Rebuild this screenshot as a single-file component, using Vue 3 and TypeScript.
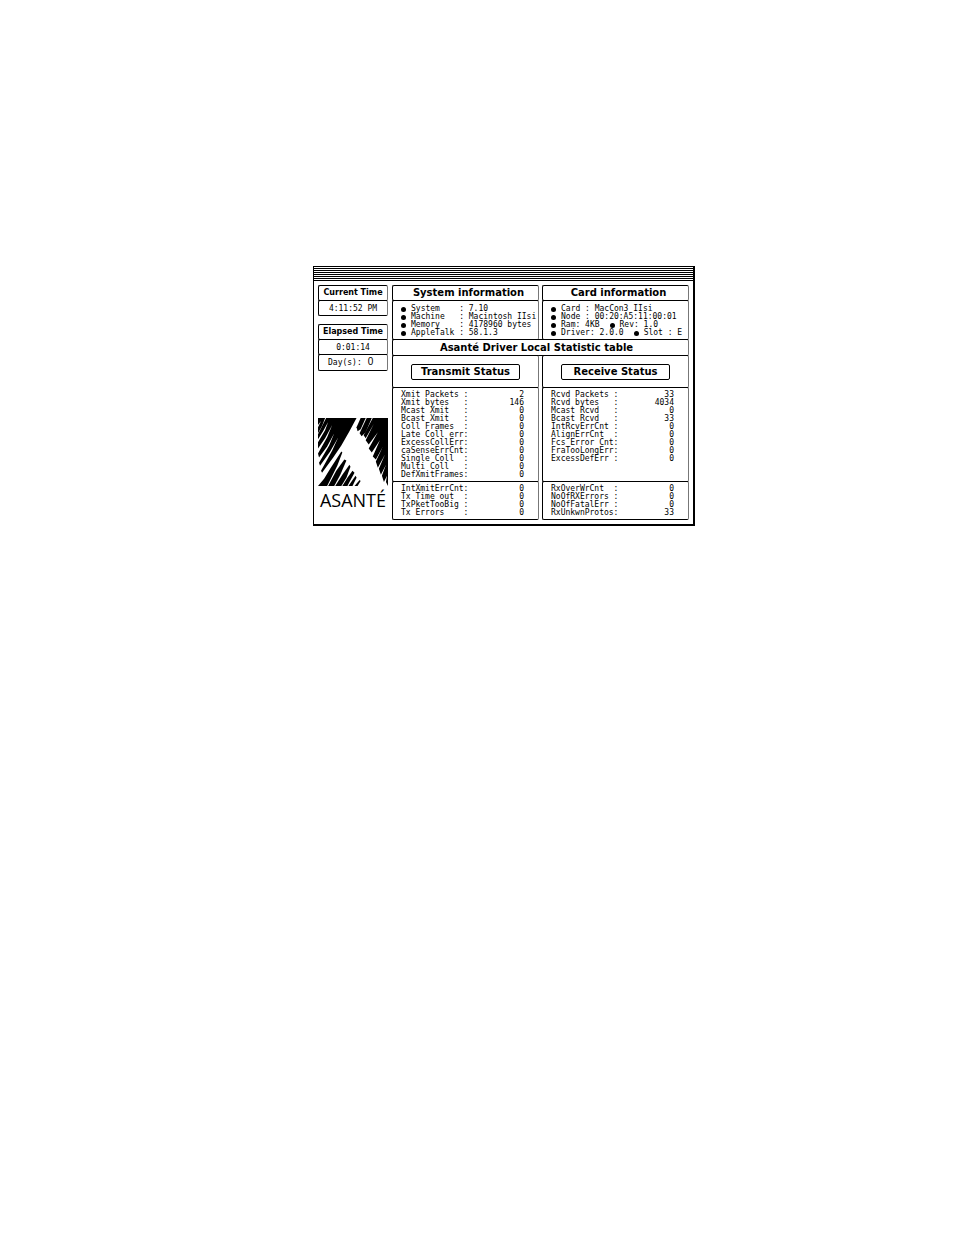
<script setup lang="ts">
interface Stat {
  label: string
  value: string
}

const systemInfo: string[] = [
  'System    : 7.10',
  'Machine   : Macintosh IIsi',
  'Memory    : 4178960 bytes',
  'AppleTalk : 58.1.3',
]

const cardInfo: string[][] = [
  ['Card : MacCon3 IIsi'],
  ['Node : 00:20:A5:11:00:01'],
  ['Ram: 4KB', 'Rev: 1.0'],
  ['Driver: 2.0.0', 'Slot : E'],
]

const transmit: Stat[] = [
  { label: 'Xmit Packets :', value: '2' },
  { label: 'Xmit bytes   :', value: '146' },
  { label: 'Mcast Xmit   :', value: '0' },
  { label: 'Bcast Xmit   :', value: '0' },
  { label: 'Coll Frames  :', value: '0' },
  { label: 'Late Coll err:', value: '0' },
  { label: 'ExcessCollErr:', value: '0' },
  { label: 'caSenseErrCnt:', value: '0' },
  { label: 'Single Coll  :', value: '0' },
  { label: 'Multi Coll   :', value: '0' },
  { label: 'DefXmitFrames:', value: '0' },
]

const receive: Stat[] = [
  { label: 'Rcvd Packets :', value: '33' },
  { label: 'Rcvd bytes   :', value: '4034' },
  { label: 'Mcast Rcvd   :', value: '0' },
  { label: 'Bcast Rcvd   :', value: '33' },
  { label: 'IntRcvErrCnt :', value: '0' },
  { label: 'AlignErrCnt  :', value: '0' },
  { label: 'Fcs Error Cnt:', value: '0' },
  { label: 'FraTooLongErr:', value: '0' },
  { label: 'ExcessDefErr :', value: '0' },
]

const transmitErrors: Stat[] = [
  { label: 'IntXmitErrCnt:', value: '0' },
  { label: 'Tx Time out  :', value: '0' },
  { label: 'TxPketTooBig :', value: '0' },
  { label: 'Tx Errors    :', value: '0' },
]

const receiveErrors: Stat[] = [
  { label: 'RxOverWrCnt  :', value: '0' },
  { label: 'NoOfRXErrors :', value: '0' },
  { label: 'NoOfFatalErr :', value: '0' },
  { label: 'RxUnkwnProtos:', value: '33' },
]
</script>

<template>
  <main class="page">
    <section class="window" aria-label="Driver statistics">
      <div class="titlebar"></div>
      <div class="content">
        <aside class="side">
          <div class="group">
            <h2 class="panel small-title">Current Time</h2>
            <p class="panel clock">4:11:52 PM</p>
          </div>
          <div class="group">
            <h2 class="panel small-title">Elapsed Time</h2>
            <p class="panel clock">0:01:14</p>
            <p class="panel clock days"><span>Day(s):</span><span class="day-count">0</span></p>
          </div>
          <div class="brand">
            <svg class="mark" viewBox="0 0 69 67" aria-hidden="true">
              <path d="M0 0H7L4 8L0 15V9L3 3L0 7Z" />
              <path d="M8 0H38L31 13L23 27L15 39L4 54L3 52L14 32L20 19L12 33L2 47L1 44L11 27L16 15L9 28L1 39L0 35L9 19L14 7L7 20L0 30V24L7 12L10 4L5 13L0 21V16Z" />
              <path d="M23 33L24 34L19 47L9 67H0L6 60L12 50Z" />
              <path d="M26 41L28 42L22 56L16 67H10L18 52Z" />
              <path d="M31 46L32 48L28 59L23 67H17L24 56Z" />
              <path d="M34 52L36 54L31 63L29 67H24L29 59Z" />
              <path d="M37 57L38 59L34 67H30Z" />
              <path d="M41 61L42 62L39 67H36Z" />
              <path d="M42 0H47L42 11L39 13L38 9Z" />
              <path d="M48 0H53L47 14L43 18L41 15Z" />
              <path d="M54 0H69V67L67 63L68 57L65 63L63 57L67 46L62 56L60 50L66 36L59 49L57 43L64 28L57 41L54 38L61 22L53 34L50 30L59 14L50 26L47 22L55 6L47 20L45 17Z" />
            </svg>
            <p class="wordmark">ASANTÉ</p>
          </div>
        </aside>

        <div class="board">
          <section class="col">
            <h2 class="panel title">System information</h2>
            <ul class="panel info">
              <li v-for="line in systemInfo" :key="line">
                <span class="part"><i class="dot"></i>{{ line }}</span>
              </li>
            </ul>
          </section>
          <section class="col">
            <h2 class="panel title">Card information</h2>
            <ul class="panel info">
              <li v-for="line in cardInfo" :key="line[0]">
                <span v-for="part in line" :key="part" class="part"><i class="dot"></i>{{ part }}</span>
              </li>
            </ul>
          </section>

          <h1 class="panel title wide">Asanté Driver Local Statistic table</h1>

          <section class="col">
            <div class="panel action"><button type="button">Transmit Status</button></div>
            <div class="panel stats main-stats">
              <table aria-label="Transmit counters">
                <tbody>
                  <tr v-for="s in transmit" :key="s.label">
                    <th scope="row">{{ s.label }}</th>
                    <td>{{ s.value }}</td>
                  </tr>
                </tbody>
              </table>
            </div>
            <div class="panel stats">
              <table aria-label="Transmit errors">
                <tbody>
                  <tr v-for="s in transmitErrors" :key="s.label">
                    <th scope="row">{{ s.label }}</th>
                    <td>{{ s.value }}</td>
                  </tr>
                </tbody>
              </table>
            </div>
          </section>
          <section class="col">
            <div class="panel action"><button type="button">Receive Status</button></div>
            <div class="panel stats main-stats">
              <table aria-label="Receive counters">
                <tbody>
                  <tr v-for="s in receive" :key="s.label">
                    <th scope="row">{{ s.label }}</th>
                    <td>{{ s.value }}</td>
                  </tr>
                </tbody>
              </table>
            </div>
            <div class="panel stats">
              <table aria-label="Receive errors">
                <tbody>
                  <tr v-for="s in receiveErrors" :key="s.label">
                    <th scope="row">{{ s.label }}</th>
                    <td>{{ s.value }}</td>
                  </tr>
                </tbody>
              </table>
            </div>
          </section>
        </div>
      </div>
    </section>
  </main>
</template>

<style>
body {
  background: #fff;
}
</style>

<style scoped>
* {
  box-sizing: border-box;
}
.page {
  padding: 266px 259px 0 313px;
  color: #000;
  font-family: "DejaVu Sans Mono", "Liberation Mono", monospace;
  font-size: 8px;
  line-height: 8px;
}
.window {
  border: 1px solid #000;
  border-right-width: 2px;
  border-bottom-width: 2px;
}
.titlebar {
  height: 14px;
  background: repeating-linear-gradient(#fff 0 1px, #000 1px 2px);
}
.content {
  display: grid;
  grid-template-columns: minmax(0, 70fr) minmax(0, 297fr);
  gap: 4px;
  padding: 4px;
}
h1,
h2,
p,
ul {
  margin: 0;
  padding: 0;
}
.panel {
  border: 1px solid #000;
  border-right-color: #777;
  border-radius: 2px;
}
.panel + .panel {
  margin-top: -1px;
}
.group {
  margin-bottom: 8px;
}
.small-title,
.title {
  display: flex;
  align-items: center;
  justify-content: center;
  height: 16px;
  font-family: "DejaVu Sans", sans-serif;
  font-weight: bold;
  white-space: nowrap;
}
.small-title {
  font-size: 8px;
}
.title {
  padding-left: 6px;
  font-size: 10px;
}
.clock {
  height: 16px;
  line-height: 15px;
  text-align: center;
}
.days {
  display: flex;
  gap: 6px;
  height: 17px;
  padding-left: 9px;
}
.day-count {
  font-family: "Liberation Sans", sans-serif;
  font-size: 10px;
  line-height: 13px;
}
.brand {
  margin-top: 47px;
}
.mark {
  display: block;
  width: 100%;
}
.wordmark {
  font-family: "Open Sans", sans-serif;
  font-size: 18px;
  line-height: 28px;
  text-align: center;
}
.board {
  display: grid;
  grid-template-columns: minmax(0, 1fr) minmax(0, 1fr);
  align-content: start;
  column-gap: 3px;
}
.wide {
  grid-column: 1 / -1;
  height: 17px;
  margin: -1px 0;
  padding: 0 8px 0 0;
}
.info {
  height: 40px;
  padding: 4px 8px 0;
  list-style: none;
  white-space: pre;
}
.info li {
  display: flex;
  gap: 10px;
  height: 8px;
}
.part {
  display: flex;
  align-items: center;
  gap: 5px;
}
.dot {
  width: 5px;
  height: 5px;
  border-radius: 50%;
  background: #000;
}
.action {
  display: flex;
  align-items: center;
  justify-content: center;
  height: 33px;
}
button {
  width: 109px;
  height: 16px;
  padding: 0;
  border: 1px solid #000;
  border-radius: 2px;
  background: #fff;
  color: #000;
  font: bold 10px/14px "DejaVu Sans", sans-serif;
}
.stats {
  padding: 3px 14px 2px 8px;
}
.main-stats {
  height: 95px;
}
table {
  width: 100%;
  border-collapse: collapse;
}
th,
td {
  padding: 0;
  height: 8px;
  line-height: 8px;
  font-weight: normal;
}
th {
  text-align: left;
  white-space: pre;
}
td {
  text-align: right;
}
</style>
